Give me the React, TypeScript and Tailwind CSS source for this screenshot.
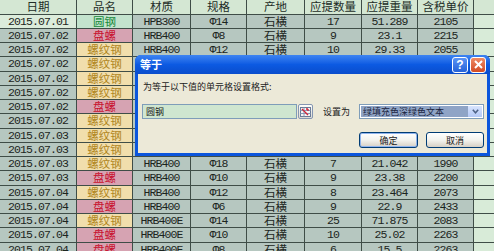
import React from "react";

type Row = {
  date: string;
  name: string;
  grade: string;
  spec: string;
  origin: string;
  qty: string;
  weight: string;
  price: string;
};

// rows 4-10 sit under the dialog, only their first two cells show
const rows: Row[] = [
  { date: "2015.07.01", name: "圆钢", grade: "HPB300", spec: "Φ14", origin: "石横", qty: "17", weight: "51.289", price: "2105" },
  { date: "2015.07.02", name: "盘螺", grade: "HRB400", spec: "Φ8", origin: "石横", qty: "9", weight: "23.1", price: "2215" },
  { date: "2015.07.02", name: "螺纹钢", grade: "HRB400", spec: "Φ12", origin: "石横", qty: "10", weight: "29.33", price: "2055" },
  { date: "2015.07.02", name: "螺纹钢", grade: "", spec: "", origin: "", qty: "", weight: "", price: "" },
  { date: "2015.07.02", name: "螺纹钢", grade: "", spec: "", origin: "", qty: "", weight: "", price: "" },
  { date: "2015.07.02", name: "螺纹钢", grade: "", spec: "", origin: "", qty: "", weight: "", price: "" },
  { date: "2015.07.02", name: "盘螺", grade: "", spec: "", origin: "", qty: "", weight: "", price: "" },
  { date: "2015.07.02", name: "螺纹钢", grade: "", spec: "", origin: "", qty: "", weight: "", price: "" },
  { date: "2015.07.03", name: "螺纹钢", grade: "", spec: "", origin: "", qty: "", weight: "", price: "" },
  { date: "2015.07.03", name: "螺纹钢", grade: "", spec: "", origin: "", qty: "", weight: "", price: "" },
  { date: "2015.07.03", name: "螺纹钢", grade: "HRB400", spec: "Φ18", origin: "石横", qty: "7", weight: "21.042", price: "1990" },
  { date: "2015.07.03", name: "盘螺", grade: "HRB400", spec: "Φ10", origin: "石横", qty: "9", weight: "23.38", price: "2200" },
  { date: "2015.07.04", name: "螺纹钢", grade: "HRB400", spec: "Φ12", origin: "石横", qty: "8", weight: "23.464", price: "2073" },
  { date: "2015.07.04", name: "盘螺", grade: "HRB400", spec: "Φ6", origin: "石横", qty: "9", weight: "22.9", price: "2433" },
  { date: "2015.07.04", name: "螺纹钢", grade: "HRB400E", spec: "Φ14", origin: "石横", qty: "25", weight: "71.875", price: "2083" },
  { date: "2015.07.04", name: "盘螺", grade: "HRB400E", spec: "Φ10", origin: "石横", qty: "10", weight: "25.02", price: "2263" },
  { date: "2015.07.04", name: "盘螺", grade: "HRB400E", spec: "Φ8", origin: "石横", qty: "6", weight: "15.5", price: "2263" },
];

const headers = ["日期", "品名", "材质", "规格", "产地", "应提数量", "应提重量", "含税单价"];
const widths = ["w-[77px]", "w-[56px]", "w-[58px]", "w-[56px]", "w-[58px]", "w-[57px]", "w-[56px]", "w-[56px]"];

const cjk = "font-['Noto_Sans_CJK_SC',sans-serif] text-[11.5px]";
const mono = "font-['Liberation_Mono','Noto_Sans_CJK_SC',monospace] text-[11.5px] tracking-[-0.9px]";

const nameStyle: Record<string, string> = {
  圆钢: "bg-[#c3e3cd] text-[#178a3a]",
  盘螺: "bg-[#d6a3b2] text-[#c8102e]",
  螺纹钢: "bg-[#f1deac] text-[#b08620]",
};

const cell = "flex items-center justify-center h-full border-r border-[#3f4d47] leading-none overflow-visible";

const DataRow = ({ row, first }: { row: Row; first: boolean }) => (
  <div className="flex h-[14.25px] border-b border-[#3f4d47] text-[#1c2521]">
    <div className={`${cell} ${widths[0]} ${mono} ${first ? "bg-[#dcecdb]" : "bg-[#b6c7c0]"}`}>{row.date}</div>
    <div className={`${cell} ${widths[1]} ${cjk} ${nameStyle[row.name]}`}>{row.name}</div>
    <div className={`${cell} ${widths[2]} ${mono} bg-[#b6c7c0]`}>{row.grade}</div>
    <div className={`${cell} ${widths[3]} ${mono} bg-[#b6c7c0]`}>{row.spec}</div>
    <div className={`${cell} ${widths[4]} ${cjk} bg-[#b6c7c0]`}>{row.origin}</div>
    <div className={`${cell} ${widths[5]} ${mono} bg-[#b6c7c0]`}>{row.qty}</div>
    <div className={`${cell} ${widths[6]} ${mono} bg-[#b6c7c0]`}>{row.weight}</div>
    <div className={`${cell} ${widths[7]} ${mono} bg-[#b6c7c0]`}>{row.price}</div>
  </div>
);

const RefIcon = () => (
  <svg width="11" height="10" viewBox="0 0 11 10">
    <rect x="0.5" y="0.5" width="10" height="9" fill="#f4f4f4" stroke="#6a7a96" />
    <line x1="0.5" y1="3.5" x2="10.5" y2="3.5" stroke="#8a9ab6" />
    <line x1="0.5" y1="6.5" x2="10.5" y2="6.5" stroke="#8a9ab6" />
    <line x1="4" y1="0.5" x2="4" y2="9.5" stroke="#8a9ab6" />
    <path d="M2 2 L8 8 M8 2 L6 2 M8 2 L8 4" stroke="#d0243a" strokeWidth="1.4" fill="none" />
  </svg>
);

const Dialog = () => (
  <div className="absolute left-[135px] top-[55px] w-[355px] h-[101px] flex flex-col rounded-t-[6px] bg-[#0b55dc] font-['Noto_Sans_CJK_SC',sans-serif]">
    <div className="h-[19px] flex items-center pl-[5px] pr-[4px] rounded-t-[6px] bg-gradient-to-b from-[#3d84f2] via-[#0c5ae2] to-[#0a4ccc]">
      <span className="text-white font-bold text-[11px] leading-none">等于</span>
      <div className="ml-auto flex gap-[2px]">
        <div className="w-[16px] h-[16px] rounded-[3px] border border-white bg-gradient-to-b from-[#5a93f5] to-[#2662d8] flex items-center justify-center text-white font-bold text-[12px] leading-none font-['Liberation_Sans',sans-serif]">
          ?
        </div>
        <div className="w-[16px] h-[16px] rounded-[3px] border border-white bg-gradient-to-b from-[#ee8a64] to-[#d24a22] flex items-center justify-center">
          <svg width="9" height="9" viewBox="0 0 9 9">
            <path d="M1 1 L8 8 M8 1 L1 8" stroke="white" strokeWidth="2" />
          </svg>
        </div>
      </div>
    </div>
    <div className="flex-1 mx-[3px] mb-[3px] bg-[#ece9d8] pl-[4px] pr-[3px] pt-[7px] flex flex-col text-[9px] text-[#1a1a1a]">
      <div className="h-[12px] leading-[12px] pl-[1px]">为等于以下值的单元格设置格式:</div>
      <div className="mt-[11px] flex items-center h-[15px]">
        <div className="w-[155px] h-[15px] border border-[#7f9db9] bg-[#cfe6d0] flex items-center pl-[3px] leading-none">
          圆钢
        </div>
        <div className="w-[15px] h-[15px] ml-[1px] border border-[#8596b2] rounded-[2px] bg-gradient-to-b from-[#fdfdfb] to-[#dcdcd4] flex items-center justify-center">
          <RefIcon />
        </div>
        <div className="flex-1 pl-[10px] leading-none">设置为</div>
        <div className="w-[125px] h-[15px] border border-[#7f9db9] bg-white flex p-[1px]">
          <div className="flex-1 bg-[#8fa4c6] text-[#1b2440] flex items-center pl-[2px] leading-none">绿填充色深绿色文本</div>
          <div className="w-[14px] h-full bg-gradient-to-b from-[#d8e4fd] to-[#b4c8f5] flex items-center justify-center">
            <svg width="7" height="5" viewBox="0 0 7 5">
              <path d="M0.8 0.8 L3.5 3.8 L6.2 0.8" stroke="#4d6185" strokeWidth="1.5" fill="none" />
            </svg>
          </div>
        </div>
      </div>
      <div className="mt-[13px] flex justify-end gap-[8px]">
        <div className="w-[59px] h-[16px] rounded-[3px] border border-[#003c74] bg-gradient-to-b from-[#ffffff] via-[#f3f3ee] to-[#d6d0c5] shadow-[inset_0_0_0_1px_#8fb4ee] flex items-center justify-center leading-none">
          确定
        </div>
        <div className="w-[58px] h-[16px] rounded-[3px] border border-[#003c74] bg-gradient-to-b from-[#ffffff] via-[#f3f3ee] to-[#d6d0c5] flex items-center justify-center leading-none">
          取消
        </div>
      </div>
    </div>
  </div>
);

export default function App() {
  return (
    <div className="relative w-[494px] h-[251px] overflow-hidden bg-[#d8ebd8]">
      <div className="flex flex-col">
        <div className="flex h-[14.7px] border-b border-[#3f4d47] bg-[#d4e7d3] text-[#222c27]">
          {headers.map((h, i) => (
            <div key={h} className={`${cell} ${widths[i]} ${cjk}`}>
              {h}
            </div>
          ))}
        </div>
        {rows.map((r, i) => (
          <DataRow key={i} row={r} first={i === 0} />
        ))}
      </div>
      <Dialog />
    </div>
  );
}
